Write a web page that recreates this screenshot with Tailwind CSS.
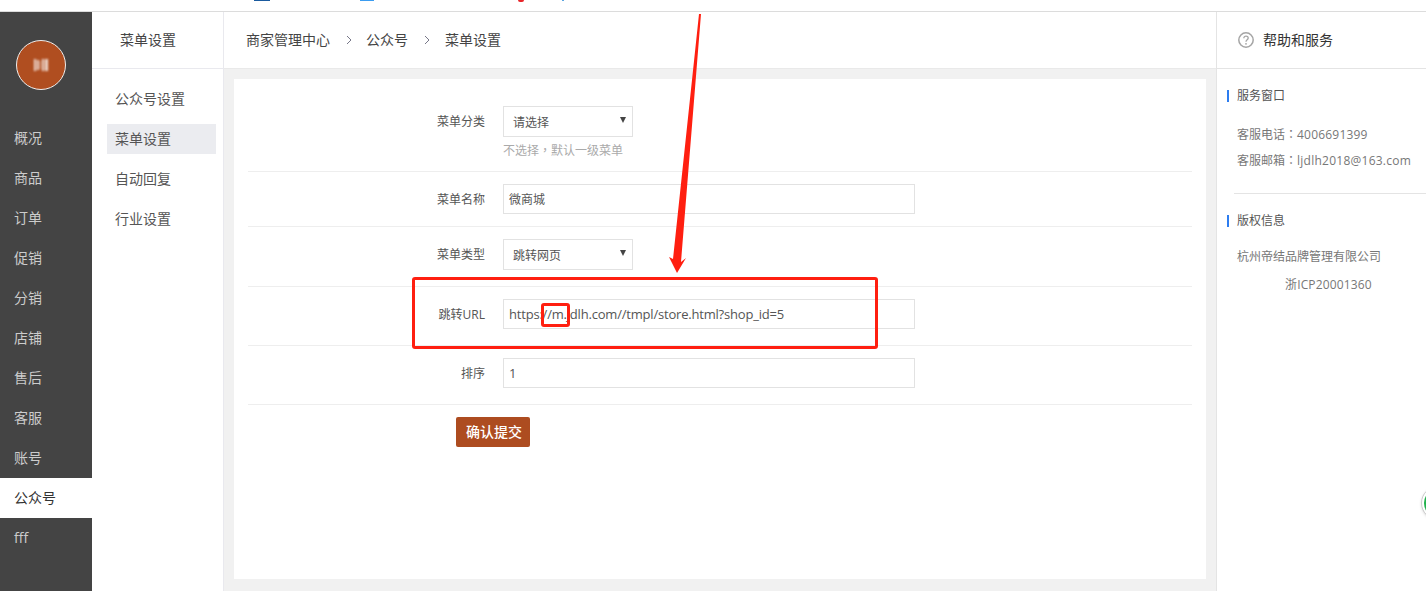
<!DOCTYPE html>
<html lang="zh-CN">
<head>
<meta charset="utf-8">
<script src="https://cdn.jsdelivr.net/npm/@tailwindcss/browser@4"></script>
<title>菜单设置</title>
</head>
<body class="relative w-[1426px] h-[591px] overflow-hidden bg-white font-['Open_Sans','Noto_Sans_CJK_SC',sans-serif] text-[#555]">
  <!-- cropped strip above the app -->
  <div class="relative h-3 border-b border-[#dcdcdc] bg-white">
    <span class="absolute left-[254px] top-0 h-[1px] w-4 bg-[#1a5a9e]"></span>
    <span class="absolute left-[360px] top-0 h-[1px] w-[14px] bg-[#3b9cf0]"></span>
    <span class="absolute left-[518px] top-0 h-[2px] w-[6px] rounded-b-full bg-[#e8252a]"></span>
    <span class="absolute left-[562px] top-0 h-[1px] w-[2px] bg-[#5aa5e0]"></span>
  </div>

  <div class="flex h-[579px]">
    <!-- dark sidebar -->
    <aside class="w-[92px] shrink-0 bg-[#444] text-[#ccc]">
      <div class="h-[106px] pt-7 pl-4">
        <div class="flex h-[50px] w-[50px] items-center justify-center rounded-full border border-[#eee] bg-[#b04e20]">
          <svg width="14" height="14" viewBox="0 0 14 14" class="blur-[1px]" fill="#fff"><rect x="0" y="1" width="2" height="12" opacity=".8"/><rect x="3" y="2" width="2" height="10" opacity=".8"/><rect x="6" y="3" width="1" height="8" opacity=".4"/><rect x="8" y="1" width="2" height="12" opacity=".8"/><rect x="11" y="1" width="3" height="12" opacity=".8"/></svg>
        </div>
      </div>
      <nav class="text-sm">
        <div class="flex h-10 items-center pl-[14px]">概况</div>
        <div class="flex h-10 items-center pl-[14px]">商品</div>
        <div class="flex h-10 items-center pl-[14px]">订单</div>
        <div class="flex h-10 items-center pl-[14px]">促销</div>
        <div class="flex h-10 items-center pl-[14px]">分销</div>
        <div class="flex h-10 items-center pl-[14px]">店铺</div>
        <div class="flex h-10 items-center pl-[14px]">售后</div>
        <div class="flex h-10 items-center pl-[14px]">客服</div>
        <div class="flex h-10 items-center pl-[14px]">账号</div>
        <div class="flex h-10 items-center bg-white pl-[14px] text-[#333]">公众号</div>
        <div class="flex h-10 items-center pl-[14px]">fff</div>
      </nav>
    </aside>

    <!-- sub menu -->
    <aside class="w-[132px] shrink-0 border-r border-[#e9e9ee] text-sm">
      <div class="flex h-[57px] items-center border-b border-[#e9e9ee] pl-7 text-[#444]">菜单设置</div>
      <div class="pt-[10px] pl-[15px] pr-[7px] text-[#555]">
        <div class="flex h-10 items-center pl-2">公众号设置</div>
        <div class="flex h-[30px] my-[5px] items-center bg-[#ebecf0] pl-2">菜单设置</div>
        <div class="flex h-10 items-center pl-2">自动回复</div>
        <div class="flex h-10 items-center pl-2">行业设置</div>
      </div>
    </aside>

    <!-- center -->
    <main class="flex min-w-0 flex-1 flex-col">
      <div class="flex h-[57px] shrink-0 items-center border-b border-[#e9e9e9] pl-[22px] text-sm text-[#444]">
        <span>商家管理中心</span>
        <svg class="ml-4 mr-[14px]" width="6" height="10" viewBox="0 0 6 10" fill="none" stroke="#778" stroke-width="1"><path d="M1 1l4 4-4 4"/></svg>
        <span>公众号</span>
        <svg class="ml-4 mr-[15px]" width="6" height="10" viewBox="0 0 6 10" fill="none" stroke="#778" stroke-width="1"><path d="M1 1l4 4-4 4"/></svg>
        <span>菜单设置</span>
      </div>
      <div class="flex-1 bg-[#f1f1f1] pt-[10px] pr-[10px] pl-[10px] pb-3">
        <div class="h-[500px] bg-white px-[14px] text-xs">
          <!-- row -->
          <div class="flex h-[93px] border-b border-[#eee] pt-[27px]">
            <div class="w-[237px] pt-2 text-right">菜单分类</div>
            <div class="ml-[18px]">
              <div class="relative flex h-[31px] w-[130px] items-center border border-[#e2e2e2] pl-[9px] pt-[2px]">请选择
                <span class="absolute right-[6px] top-[10px] h-0 w-0 border-x-[3px] border-t-[6px] border-x-transparent border-t-[#444]"></span>
              </div>
              <div class="mt-[6px] leading-4 text-[#aaa]">不选择<span lang="zh-TW" class="font-['Noto_Sans_CJK_TC'] leading-[0]">，</span>默认一级菜单</div>
            </div>
          </div>
          <div class="flex h-[55px] border-b border-[#eee] pt-3">
            <div class="w-[237px] pt-2 text-right">菜单名称</div>
            <div class="ml-[18px] flex h-[30px] w-[412px] items-center border border-[#e2e2e2] pl-[5px] pt-[2px]">微商城</div>
          </div>
          <div class="flex h-[60px] border-b border-[#eee] pt-3">
            <div class="w-[237px] pt-2 text-right">菜单类型</div>
            <div class="relative ml-[18px] flex h-[31px] w-[130px] items-center border border-[#e2e2e2] pl-[9px] pt-[2px]">跳转网页
              <span class="absolute right-[6px] top-[10px] h-0 w-0 border-x-[3px] border-t-[6px] border-x-transparent border-t-[#444]"></span>
            </div>
          </div>
          <div class="flex h-[59px] border-b border-[#eee] pt-3">
            <div class="w-[237px] pt-2 text-right">跳转URL</div>
            <div class="ml-[18px] flex h-[30px] w-[412px] items-center border border-[#e2e2e2] pl-[5px] pt-[2px] text-[13px] tracking-[-0.2px]">https://m.jdlh.com//tmpl/store.html?shop_id=5</div>
          </div>
          <div class="flex h-[59px] border-b border-[#eee] pt-3">
            <div class="w-[237px] pt-2 text-right">排序</div>
            <div class="ml-[18px] flex h-[30px] w-[412px] items-center border border-[#e2e2e2] pl-[5px] pt-[2px] text-[13px]">1</div>
          </div>
          <div class="pt-3 pl-[208px]">
            <div class="flex h-[30px] w-[74px] items-center justify-center rounded-[2px] bg-[#ad4c20] pl-[2px] text-sm font-medium text-white">确认提交</div>
          </div>
        </div>
      </div>
    </main>

    <!-- help panel -->
    <aside class="w-[210px] shrink-0 border-l border-[#e4e4e4] text-xs">
      <div class="flex h-[57px] items-center border-b border-[#e4e4e4] pl-[21px] text-sm text-[#333]">
        <svg width="16" height="16" viewBox="0 0 16 16" fill="none" class="mr-[9px]"><circle cx="8" cy="8" r="7.2" stroke="#a5a5a5" stroke-width="1.5"/><path d="M5.8 6.2c0-1.3 1-2.1 2.2-2.1s2.2.8 2.2 2c0 1.7-2.2 1.8-2.2 3.6" stroke="#a5a5a5" stroke-width="1.3"/><circle cx="8" cy="11.8" r=".9" fill="#a5a5a5"/></svg>
        帮助和服务
      </div>
      <div class="pl-[10px] pt-[21px]">
        <div class="flex h-3 items-center border-l-2 border-[#2d7df0] pl-2 text-[#555]">服务窗口</div>
        <div class="mt-5 pl-[10px] leading-[26px] text-[#777]">
          <div>客服电话<span lang="zh-TW" class="font-['Noto_Sans_CJK_TC'] leading-[0]">：</span><span class="tracking-[0.2px]">4006691399</span></div>
          <div>客服邮箱<span lang="zh-TW" class="font-['Noto_Sans_CJK_TC'] leading-[0]">：</span><span class="tracking-[0.25px]">ljdlh2018@163.com</span></div>
        </div>
        <div class="mt-[19px] ml-[7px] border-t border-[#e4e4e4]"></div>
        <div class="mt-[21px] flex h-3 items-center border-l-2 border-[#2d7df0] pl-2 text-[#555]">版权信息</div>
        <div class="mt-4 pl-[10px] leading-[28px] text-[#777]">
          <div>杭州帝结品牌管理有限公司</div>
          <div class="pl-12 tracking-[0.15px]">浙ICP20001360</div>
        </div>
      </div>
    </aside>
  </div>

  <!-- floating chat button, cut off by the window edge -->
  <div class="absolute left-[1421px] top-[486px] flex h-[34px] w-[34px] items-center justify-center rounded-full border border-[#ccc] bg-white shadow">
    <div class="h-[28px] w-[28px] rounded-full bg-[#22b24c]"></div>
  </div>

  <!-- red annotations -->
  <div class="absolute left-[412px] top-[277px] h-[72px] w-[466px] rounded-[3px] border-[3px] border-[#ff1f10]"></div>
  <div class="absolute left-[541px] top-[303px] h-[24px] w-[29px] rounded-[3px] border-[3px] border-[#ff1f10]"></div>
  <svg class="absolute left-[660px] top-[12px]" width="50" height="262" viewBox="0 0 50 262" fill="#ff1f10"><path d="M39 2 L41 2 L21 250 L26 246 L17 261 L9 245 L13 247 Z"/></svg>
</body>
</html>
